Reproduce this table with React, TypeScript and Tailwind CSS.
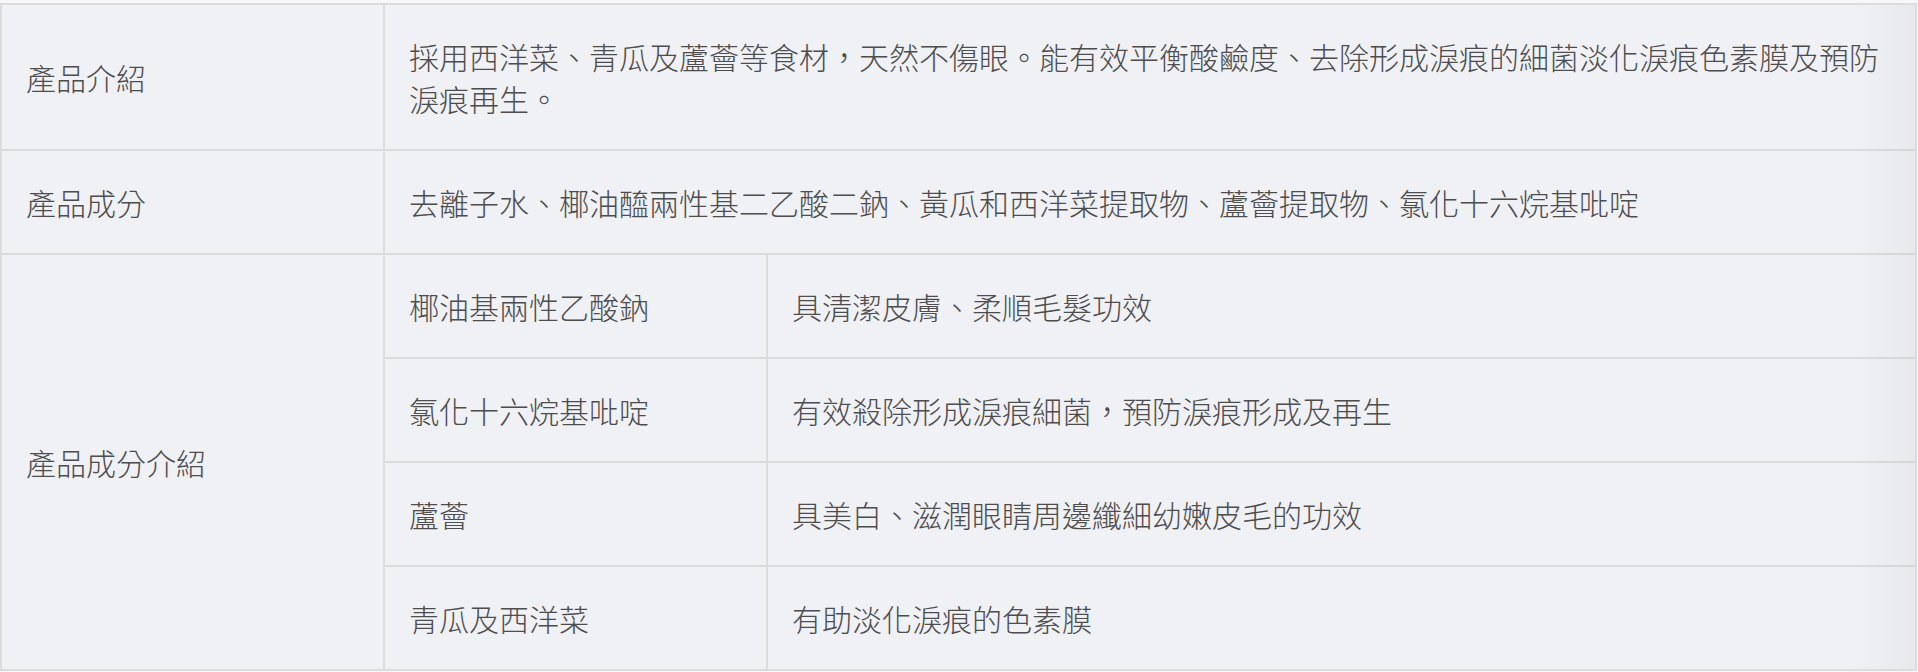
import React from 'react';

type SubRow = { name: string; effect: string };

const subRows: SubRow[] = [
  { name: '椰油基兩性乙酸鈉', effect: '具清潔皮膚、柔順毛髮功效' },
  { name: '氯化十六烷基吡啶', effect: '有效殺除形成淚痕細菌，預防淚痕形成及再生' },
  { name: '蘆薈', effect: '具美白、滋潤眼睛周邊纖細幼嫩皮毛的功效' },
  { name: '青瓜及西洋菜', effect: '有助淡化淚痕的色素膜' },
];

const cell = 'border-r-2 border-b-2 border-[#dcdcdc] px-6 py-[30px] align-middle';

export default function App() {
  return (
    <div
      className="w-[1918px] h-[672px] bg-[#f7f7f8] pt-[3px] text-[30px] font-light leading-[42px] text-[#4d4d4d]"
      style={{ fontFamily: '"Noto Sans CJK TC", "Noto Sans", sans-serif' }}
    >
      <div className="relative w-[1917px]">
        <table className="w-[1917px] table-fixed border-separate border-spacing-0 border-t-2 border-l-2 border-[#dcdcdc] bg-[#f0f1f5]">
          <colgroup>
            <col className="w-[383px]" />
            <col className="w-[383px]" />
            <col />
          </colgroup>
          <tbody>
            <tr>
              <td className={cell}>產品介紹</td>
              <td className={cell} colSpan={2}>
                採用西洋菜、青瓜及蘆薈等食材，天然不傷眼。能有效平衡酸鹼度、去除形成淚痕的細菌淡化淚痕色素膜及預防淚痕再生。
              </td>
            </tr>
            <tr>
              <td className={cell}>產品成分</td>
              <td className={cell} colSpan={2}>
                去離子水、椰油醯兩性基二乙酸二鈉、黃瓜和西洋菜提取物、蘆薈提取物、氯化十六烷基吡啶
              </td>
            </tr>
            {subRows.map((row, i) => (
              <tr key={row.name}>
                {i === 0 && (
                  <td className={cell} rowSpan={subRows.length}>
                    產品成分介紹
                  </td>
                )}
                <td className={cell}>{row.name}</td>
                <td className={cell}>{row.effect}</td>
              </tr>
            ))}
          </tbody>
        </table>
        <div className="pointer-events-none absolute top-[2px] bottom-[2px] right-[2px] w-[64px] bg-gradient-to-r from-transparent to-black/[0.035]" />
      </div>
    </div>
  );
}
